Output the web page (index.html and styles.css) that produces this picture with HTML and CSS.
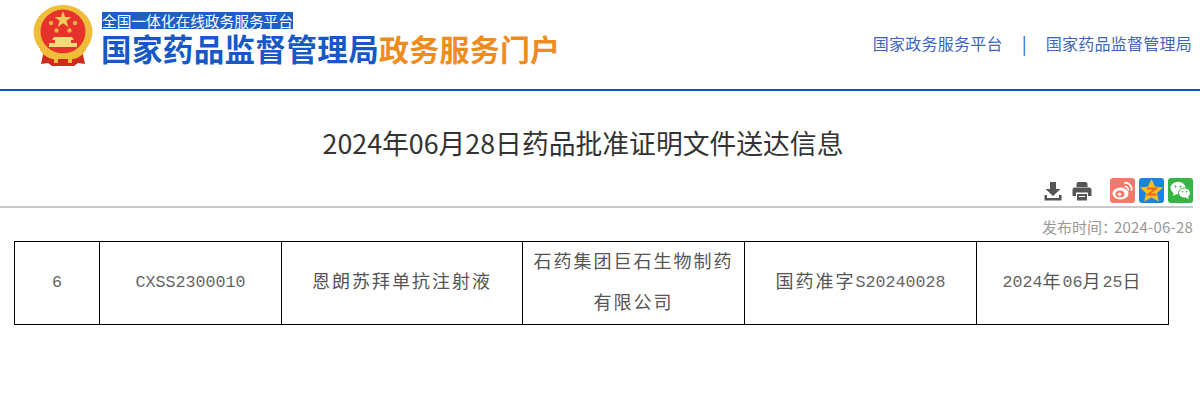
FILE: index.html
```html
<!DOCTYPE html>
<html lang="zh-CN">
<head>
<meta charset="utf-8">
<title>2024年06月28日药品批准证明文件送达信息</title>
<link rel="stylesheet" href="styles.css">
</head>
<body>
<header class="header">
  <div class="brand">
    <svg class="emblem" viewBox="0 0 64 64" width="64" height="64" aria-hidden="true">
      <path d="M13 46 L10 60 L17 59 L21 62 L43 62 L47 59 L54 60 L51 46 Z" fill="#cf2a1c"/>
      <ellipse cx="32" cy="28" rx="29.500" ry="27" fill="#f0bd3a"/>
      <ellipse cx="32" cy="27.500" rx="22.500" ry="22" fill="#e6322a"/>
      <polygon points="32,7 34.100,13 40.500,13 35.400,16.800 37.300,23 32,19.300 26.700,23 28.600,16.800 23.500,13 29.900,13" fill="#f3cc5a"/>
      <circle cx="20" cy="19" r="2.200" fill="#e9b040"/>
      <circle cx="44" cy="19" r="2.200" fill="#e9b040"/>
      <circle cx="25.500" cy="26.500" r="2.200" fill="#e9b040"/>
      <circle cx="38.500" cy="26.500" r="2.200" fill="#e9b040"/>
      <path d="M23 33 H41 L43 36 H40 V39 H46 V43 H18 V39 H24 V36 H21 Z" fill="#f6d978"/>
      <path d="M9 40 C14 50 25 52 32 49 C39 52 50 50 55 40 L55 46 C48 57 38 56 32 54 C26 56 16 57 9 46 Z" fill="#f0bd3a"/>
      <path d="M23 50 H41 V59 H37 V55 H27 V59 H23 Z" fill="#f0bd3a"/>
    </svg>
    <div class="brand-text">
      <div class="brand-line"><span class="brand-tag">全国一体化在线政务服务平台</span></div>
      <div class="brand-name">国家药品监督管理局<span class="brand-accent">政务服务门户</span></div>
    </div>
  </div>
  <nav class="links">
    <a class="link">国家政务服务平台</a>
    <span class="sep">|</span>
    <a class="link">国家药品监督管理局</a>
  </nav>
</header>

<main>
  <h1 class="title">2024年06月28日药品批准证明文件送达信息</h1>

  <div class="tools">
    <svg class="tool tool-dl" viewBox="0 0 20 20" width="20" height="20" aria-hidden="true">
      <path d="M7 1 H13 V8 H17.500 L10 15 L2.500 8 H7 Z M1.500 14 H4 V17 H16 V14 H18.500 V19.500 H1.500 Z" fill="#555"/>
    </svg>
    <svg class="tool tool-print" viewBox="0 0 20 20" width="20" height="20" aria-hidden="true">
      <path d="M4.500 6 V3 A2 2 0 0 1 6.500 1 H13.500 A2 2 0 0 1 15.500 3 V6 Z" fill="#555"/>
      <path d="M3 6.500 H17 A2.500 2.500 0 0 1 19.500 9 V15 H16 V11.500 H4 V15 H0.500 V9 A2.500 2.500 0 0 1 3 6.500 Z" fill="#555"/>
      <path d="M5 13 H15 V19.500 H5 Z" fill="#555"/>
      <path d="M7 15 H13 V16 H7 Z" fill="#fff"/>
    </svg>
    <svg class="share" viewBox="0 0 25 25" width="25" height="25" aria-hidden="true">
      <rect width="25" height="25" rx="3" fill="#f5786a"/>
      <ellipse cx="10.500" cy="15.500" rx="8" ry="6" fill="#fff"/>
      <ellipse cx="10" cy="16" rx="4.500" ry="3.500" fill="#f5786a"/>
      <circle cx="9.500" cy="16.300" r="1.700" fill="#fff"/>
      <path d="M15 5 A6 6 0 0 1 21.500 12" fill="none" stroke="#fff" stroke-width="1.800" stroke-linecap="round"/>
      <path d="M15 8.500 A3 3 0 0 1 18.200 12" fill="none" stroke="#fff" stroke-width="1.500" stroke-linecap="round"/>
    </svg>
    <svg class="share" viewBox="0 0 25 25" width="25" height="25" aria-hidden="true">
      <rect width="25" height="25" rx="3" fill="#1a84e0"/>
      <polygon points="12.500,1 16,8.500 24,9.500 18,15 19.800,23.500 12.500,19.500 5.200,23.500 7,15 1,9.500 9,8.500" fill="#fbbf24"/>
      <path d="M8 10.500 H17 L9 16.500 H17.500" fill="none" stroke="#e8691c" stroke-width="1.800"/>
    </svg>
    <svg class="share" viewBox="0 0 25 25" width="25" height="25" aria-hidden="true">
      <rect width="25" height="25" rx="3" fill="#35b544"/>
      <ellipse cx="10" cy="10" rx="7.500" ry="6.300" fill="#fff"/>
      <path d="M6 14 L5 18 L9.500 15.500 Z" fill="#fff"/>
      <ellipse cx="16.500" cy="15" rx="6" ry="5" fill="#fff" stroke="#35b544"/>
      <path d="M20 18 L21 21 L17.500 19.500 Z" fill="#fff"/>
      <circle cx="7.500" cy="8.500" r="1" fill="#35b544"/>
      <circle cx="12.500" cy="8.500" r="1" fill="#35b544"/>
      <circle cx="14.500" cy="13.800" r="0.800" fill="#35b544"/>
      <circle cx="18.500" cy="13.800" r="0.800" fill="#35b544"/>
    </svg>
  </div>

  <div class="meta">发布时间：<span class="meta-date">2024-06-28</span></div>

  <table class="data">
    <colgroup>
      <col class="c1"><col class="c2"><col class="c3"><col class="c4"><col class="c5"><col class="c6">
    </colgroup>
    <tr>
      <td>6</td>
      <td>CXSS2300010</td>
      <td><span class="cjk">恩朗苏拜单抗注射液</span></td>
      <td><span class="cjk">石药集团巨石生物制药</span><br><span class="cjk">有限公司</span></td>
      <td><span class="cjk">国药准字</span>S20240028</td>
      <td>2024<span class="cjk">年</span>06<span class="cjk">月</span>25<span class="cjk">日</span></td>
    </tr>
  </table>
</main>
</body>
</html>
```

FILE: styles.css
```css
* { box-sizing: border-box; }
html, body { margin: 0; padding: 0; background: #fff; }
body {
  font-family: "Noto Sans CJK SC", "Liberation Sans", sans-serif;
  color: #333;
  overflow: hidden;
}
.header {
  height: 91px;
  border-bottom: 2px solid #0f50c8;
  display: flex;
  justify-content: space-between;
  padding: 4px 8px 0 31px;
}
.brand { display: flex; align-items: flex-start; gap: 7px; }
.emblem { flex: none; }
.brand-text { padding-top: 8px; }
.brand-line { height: 17px; display: flex; }
.brand-tag {
  background: #1d5fc9;
  color: #fff;
  font-size: 14.700px;
  line-height: 17px;
  height: 17px;
  display: block;
}
.brand-name {
  margin: 1px 0 0 -1px;
  font-size: 30.500px;
  letter-spacing: 0.400px;
  line-height: 36px;
  font-weight: 700;
  color: #1658c4;
  white-space: nowrap;
}
.brand-accent { color: #f08c1e; font-size: 30px; letter-spacing: 0.200px; }
.links {
  display: flex;
  align-items: center;
  height: 78px;
  font-size: 16px;
  color: #3d66bb;
}
.link { letter-spacing: 0.250px; }
.sep { width: 43px; text-align: center; color: #2a62c0; font-size: 18px; }
.title {
  margin: 32px 0 0;
  padding-right: 34px;
  text-align: center;
  font-size: 26.800px;
  line-height: 40px;
  font-weight: 400;
  color: #333;
}
.tools {
  margin-top: 15px;
  height: 30px;
  width: 1193px;
  border-bottom: 2px solid #c9c9c9;
  display: flex;
  justify-content: flex-end;
  align-items: flex-start;
  gap: 4px;
}
.tool { margin-top: 3px; }
.tool-dl { margin-right: 5px; }
.tool-print { margin-right: 14px; }
.meta {
  width: 1193px;
  text-align: right;
  font-size: 15px;
  line-height: 20px;
  color: #999;
  margin-top: 9px;
}
.meta-date { letter-spacing: 0.200px; margin-left: -3px; }
.data {
  margin: 4px 0 0 14px;
  width: 1155px;
  height: 84px;
  border-collapse: collapse;
  table-layout: fixed;
  font-family: "Liberation Mono", "Noto Sans CJK SC", monospace;
  font-size: 16.670px;
  color: #666;
}
.cjk {
  font-family: "Noto Sans CJK SC", sans-serif;
  font-size: 18px;
  letter-spacing: 2px;
  line-height: 1;
  vertical-align: -1px;
  color: #555;
}
.data td {
  border: 1px solid #000;
  text-align: center;
  vertical-align: middle;
  padding: 1px 0 0;
  line-height: 40.500px;
}
.c1 { width: 85px; }
.c2 { width: 182px; }
.c3 { width: 241px; }
.c4 { width: 222px; }
.c5 { width: 232px; }
.c6 { width: 192px; }
```
